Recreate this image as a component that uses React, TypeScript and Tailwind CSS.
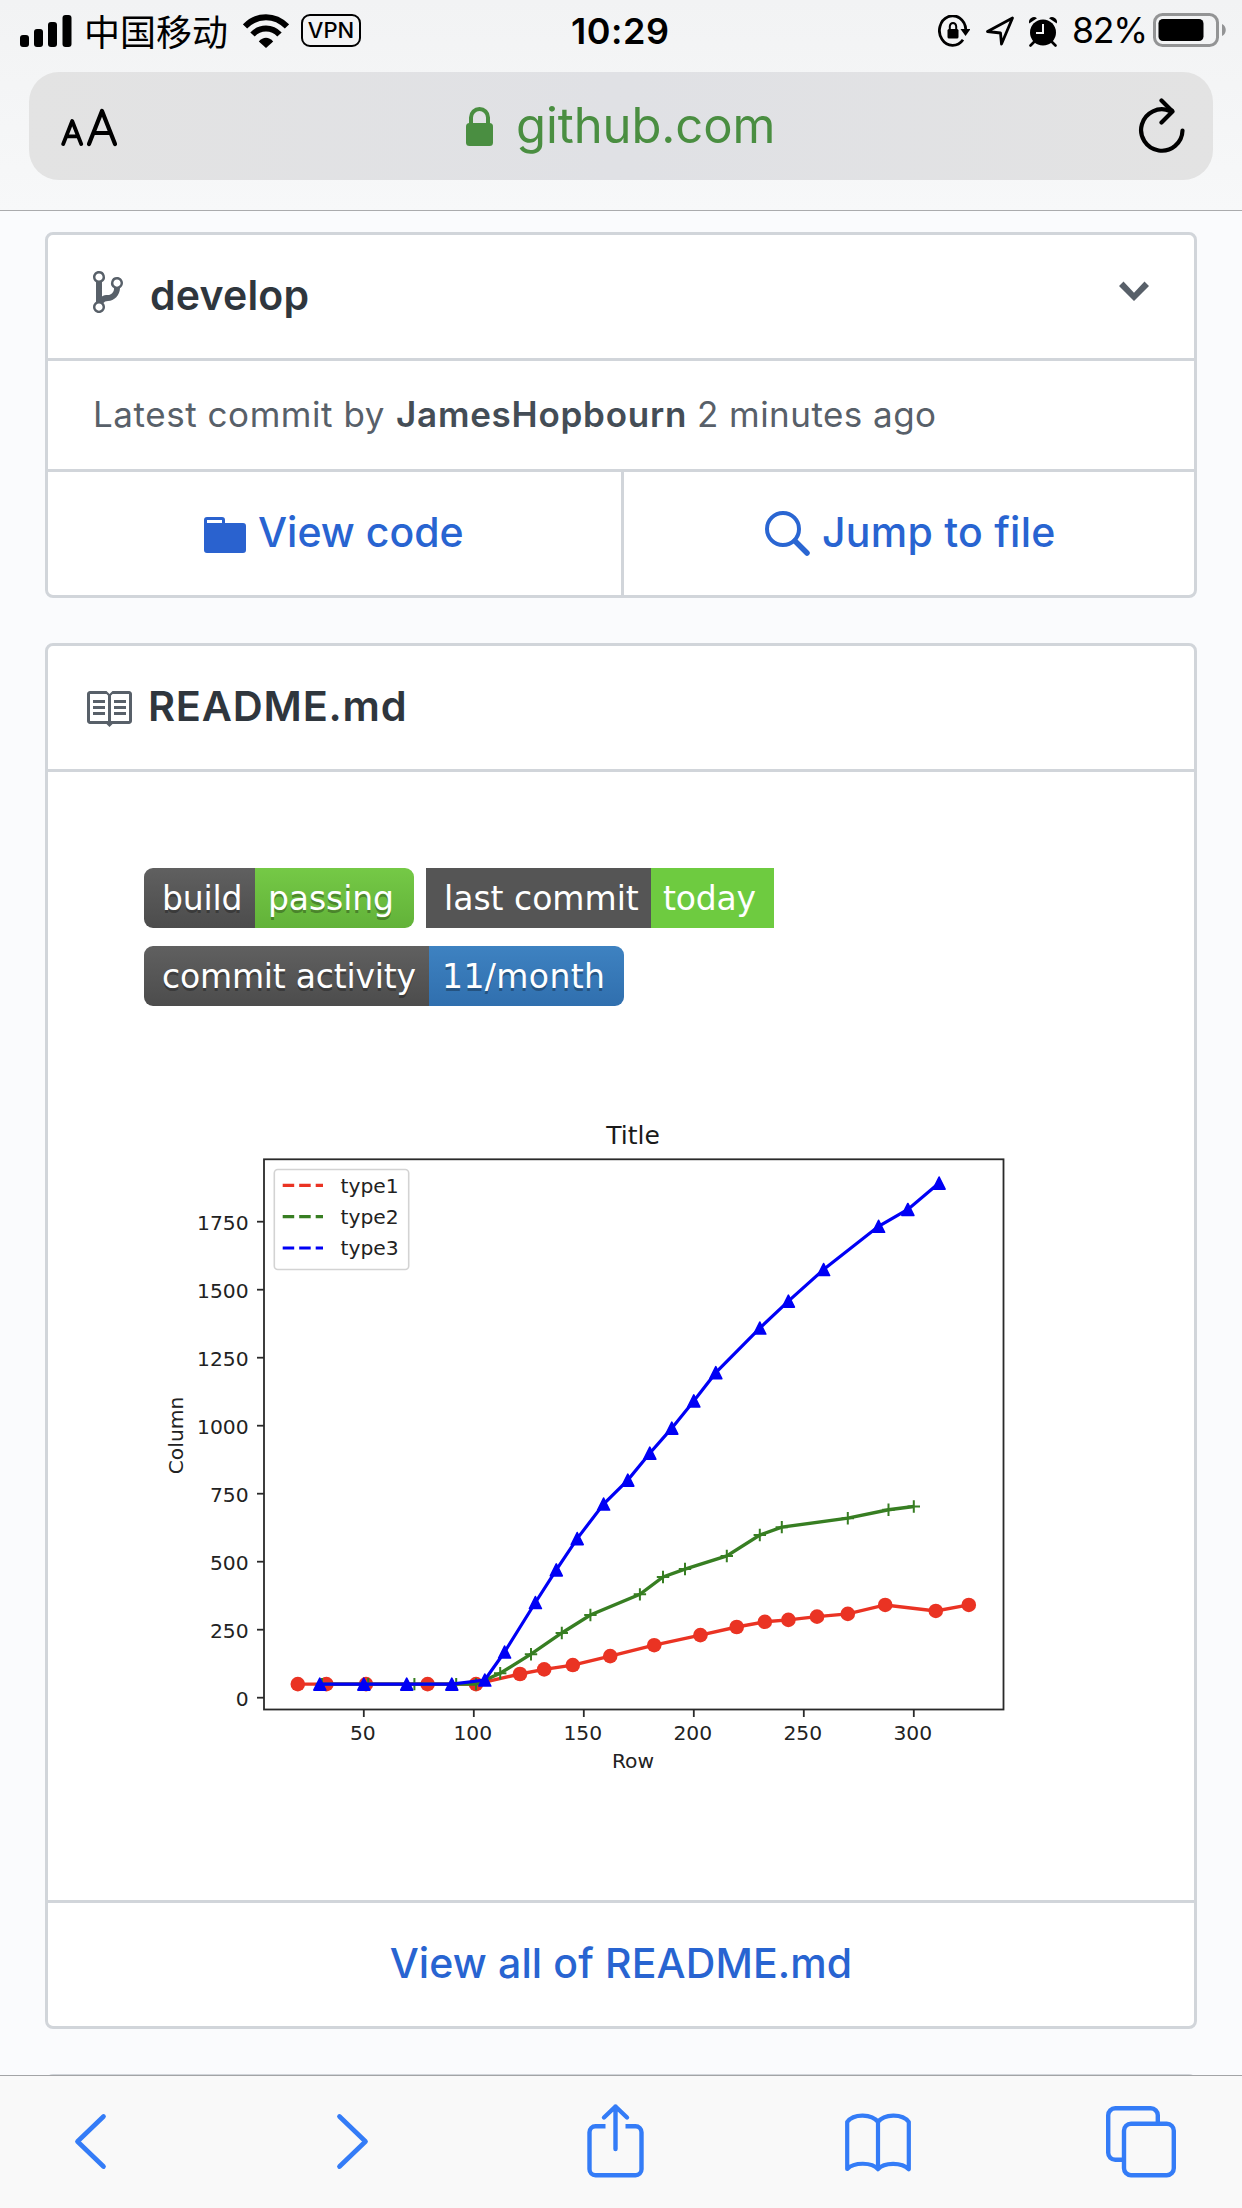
import React from "react";

type Point = [number, number];

const red: Point[] = [
  [20, 50], [33, 50], [51, 50], [79, 50], [101, 50], [121, 87], [132, 104], [145, 120], [162, 153], [182, 193],
  [203, 230], [219.5, 260], [232.3, 279], [243, 286], [256, 298], [270, 308], [287, 341], [310, 319], [325, 341],
];
const green: Point[] = [
  [31, 50], [52, 50], [73, 50], [92, 50], [101, 50], [112, 90], [126, 160], [140, 238], [153, 304], [175.5, 380],
  [186, 444], [196, 473], [215, 521], [230, 598], [240, 627], [270, 660], [288.5, 691], [300, 703],
];
const blue: Point[] = [
  [30, 50], [50, 50], [69.5, 50], [90, 50], [105, 65], [114, 168], [128, 350], [137.5, 470], [147, 585], [159, 712],
  [170, 800], [180, 899], [190, 991], [200, 1091], [210, 1195], [230, 1359], [243, 1458], [259, 1574], [284, 1733],
  [297.3, 1795], [311.5, 1892],
];

const px = (x: number) => 109.8 + x * 2.2;
const py = (y: number) => 597.7 - y * 0.272;
const line = (pts: Point[]) => pts.map(([x, y]) => `${px(x)},${py(y)}`).join(" ");

function Chart() {
  return (
    <svg
      width="900"
      height="690"
      viewBox="0 0 900 690"
      fill="none"
      fontFamily="'DejaVu Sans', sans-serif"
      fontSize="20.3"
      className="block"
    >
      <text x="489" y="44" textAnchor="middle" fontSize="25" fill="#1a1a1a">Title</text>
      <g stroke="#2a2a2a" strokeWidth="1.8">
        <rect x="120" y="59.3" width="739.5" height="550.2" />
        {[50, 100, 150, 200, 250, 300].map((v) => (
          <path key={v} d={`M${px(v)} 610v7`} />
        ))}
        {[0, 250, 500, 750, 1000, 1250, 1500, 1750].map((v) => (
          <path key={v} d={`M113 ${py(v)}h7`} />
        ))}
      </g>
      <g fill="#222">
        {[50, 100, 150, 200, 250, 300].map((v) => (
          <text key={v} x={px(v) - 1} y="640" textAnchor="middle">{v}</text>
        ))}
        {[0, 250, 500, 750, 1000, 1250, 1500, 1750].map((v) => (
          <text key={v} x="104.7" y={py(v) + 8} textAnchor="end">{v}</text>
        ))}
        <text x="489" y="668.3" textAnchor="middle">Row</text>
        <text transform="translate(38.6 335.5) rotate(-90)" textAnchor="middle">Column</text>
      </g>
      <g stroke="#ea3323" strokeWidth="3.4">
        <polyline points={line(red)} />
        {red.map(([x, y]) => (
          <circle key={x} cx={px(x)} cy={py(y)} r="7.3" fill="#ea3323" stroke="none" />
        ))}
      </g>
      <g stroke="#377e22" strokeWidth="3.4">
        <polyline points={line(green)} />
        {green.map(([x, y]) => (
          <path key={x} strokeWidth="2" d={`M${px(x) - 6.2} ${py(y)}h12.4M${px(x)} ${py(y) - 6.2}v12.4`} />
        ))}
      </g>
      <g stroke="#0000f5" strokeWidth="3.2">
        <polyline points={line(blue)} />
        {blue.map(([x, y]) => (
          <path key={x} fill="#0000f5" strokeWidth="1.6" strokeLinejoin="round" d={`M${px(x)} ${py(y) - 6}l6 12h-12z`} />
        ))}
      </g>
      <rect x="130.3" y="69.5" width="134.4" height="100" rx="3.5" fill="#fff" stroke="#d3d3d3" strokeWidth="1.6" />
      {[
        ["type1", "#ea3323", 85.3],
        ["type2", "#377e22", 116.7],
        ["type3", "#0000f5", 148],
      ].map(([name, color, y]) => (
        <g key={name as string}>
          <path d={`M138.7 ${y}h40.3`} stroke={color as string} strokeWidth="3.2" strokeDasharray="11.5 5" />
          <text x="196.5" y={(y as number) + 7.4} fill="#222">{name}</text>
        </g>
      ))}
    </svg>
  );
}

function StatusBar() {
  return (
    <div className="flex h-[62px] items-center text-black">
      <svg className="ml-5 h-8 w-[52px] shrink-0" viewBox="0 0 52 32">
        <rect x="0" y="20" width="9" height="12" rx="3" />
        <rect x="14" y="14" width="9" height="18" rx="3" />
        <rect x="28" y="7" width="9" height="25" rx="3" />
        <rect x="42.5" y="0" width="9" height="32" rx="3" />
      </svg>
      <div className="ml-3 w-[146px] pb-0.5 font-['Noto_Sans_CJK_SC',sans-serif] text-[36px] leading-none whitespace-nowrap">中国移动</div>
      <svg className="ml-[13px] h-[34px] w-[46px] shrink-0" viewBox="0 0 46 34" fill="none" stroke="#000" strokeWidth="6">
        <path d="M2 12.5C14 0 32 0 44 12.5" />
        <path d="M9.5 20.5C17 12.5 29 12.5 36.5 20.5" />
        <path d="M15.8 27.5C20 22.5 26 22.5 30.2 27.5L23 34z" fill="#000" stroke="none" />
      </svg>
      <div className="ml-3 mb-0.5 flex h-[33px] w-[60px] items-center justify-center rounded-[9px] border-[2.5px] border-black text-[22px] leading-none font-medium">
        VPN
      </div>
      <div className="ml-[210px] w-[98px] text-[36px] leading-none font-semibold tracking-[0.5px] whitespace-nowrap">10:29</div>
      <svg className="ml-[269px] h-8 w-8 shrink-0" viewBox="0 0 32 32" fill="none" stroke="#000" strokeWidth="2.8">
        <path d="M27.8 14.5A13.2 14.8 0 1 0 25 24.8" />
        <path d="M22.5 14h10l-5 7z" fill="#000" stroke="none" />
        <rect x="9.5" y="14" width="11" height="9.5" rx="1.5" fill="#000" stroke="none" />
        <path d="M11.8 15v-3.5a3.2 3.6 0 0 1 6.4 0V15" strokeWidth="2" />
      </svg>
      <svg className="ml-[15px] h-8 w-[30px] shrink-0" viewBox="0 0 30 32" fill="none" stroke="#000" strokeWidth="2.8" strokeLinejoin="round">
        <path d="M27.5 3 2.5 16.5l13 1.5L16.5 29z" />
      </svg>
      <svg className="ml-[13px] h-8 w-[30px] shrink-0" viewBox="0 0 30 32">
        <circle cx="15" cy="17.5" r="13" />
        <path d="M1.2 8.5A5 5 0 0 1 9 3.2zM28.8 8.5A5 5 0 0 0 21 3.2z" />
        <path d="m6 27-3.5 3.5M24 27l3.500 3.500" stroke="#000" strokeWidth="2.6" strokeLinecap="round" />
        <path d="M15 9v9H8" fill="none" stroke="#f3f4f5" strokeWidth="2" />
      </svg>
      <div className="ml-[14px] w-[81px] text-[35.5px] leading-none tracking-[-1.2px] whitespace-nowrap">82%</div>
      <svg className="mb-0.5 h-[34px] w-[74px] shrink-0" viewBox="0 0 74 34">
        <rect x="1.5" y="1.5" width="63" height="31" rx="8" fill="none" stroke="#939495" strokeWidth="3" />
        <rect x="5.5" y="6" width="45" height="22" rx="4.5" />
        <path d="M69 11c5 2 5 10 0 12z" fill="#939495" />
      </svg>
    </div>
  );
}

function AddressBar() {
  return (
    <div className="mx-[29px] mt-[10px] flex h-[108px] items-center rounded-[30px] bg-linear-to-r from-[#e3e3e3] via-[#e0e1e5] to-[#e3e3e3]">
      <svg className="mt-[3px] ml-8 h-10 w-[58px] shrink-0" viewBox="0 0 58 40" fill="none" stroke="#000" strokeWidth="4.2" strokeLinecap="round" strokeLinejoin="round">
        <path d="m2.2 36 9-23 9 23M5.5 28.3h11.4" strokeWidth="3.8" />
        <path d="m28 36 13-33 13 33M32.5 25h17" />
      </svg>
      <svg className="ml-[347px] h-[39px] w-[27px] shrink-0" viewBox="0 0 27 39" fill="#4a8e41">
        <rect y="16" width="27" height="23" rx="3.5" />
        <path d="M5 18v-7.5a8.5 8.5 0 0 1 17 0V18" fill="none" stroke="#4a8e41" strokeWidth="4" />
      </svg>
      <div className="ml-[23px] w-[260px] pb-0.5 text-[49px] leading-none tracking-[-0.1px] whitespace-nowrap text-[#4a8e41]">github.com</div>
      <svg className="ml-[362px] h-14 w-12 shrink-0" viewBox="0 0 48 56" fill="none" stroke="#000" strokeWidth="4.2" strokeLinecap="round" strokeLinejoin="round">
        <path d="M44.5 32.5A20.7 20.7 0 1 1 32 13L34 12.7" />
        <path d="m23.5 2.5 11 11-11 11" />
      </svg>
    </div>
  );
}

function RepoCard() {
  return (
    <section className="rounded-lg border-[3px] border-[#d1d5da] bg-white">
      <div className="flex h-[123px] items-center pb-0.5">
        <svg className="-mt-2 ml-[45px] h-12 w-[30px] shrink-0" viewBox="0 0 10 16" fill="#586069">
          <path d="M10 5c0-1.11-.89-2-2-2a1.993 1.993 0 0 0-1 3.72v.3c-.02.52-.23.98-.63 1.38-.4.4-.86.61-1.38.63-.83.02-1.48.16-2 .45V4.72a1.993 1.993 0 0 0-1-3.72C.88 1 0 1.89 0 3a2 2 0 0 0 1 1.72v6.56c-.59.35-1 .99-1 1.72 0 1.11.89 2 2 2 1.11 0 2-.89 2-2 0-.53-.2-1-.53-1.36.09-.06.48-.41.59-.47.25-.11.56-.17.94-.17 1.05-.05 1.95-.45 2.75-1.25S8.95 7.77 9 6.73h-.02C9.59 6.37 10 5.73 10 5zM2 1.8c.66 0 1.2.55 1.2 1.2 0 .65-.55 1.2-1.2 1.2C1.35 4.2.8 3.65.8 3c0-.65.55-1.2 1.2-1.2zm0 12.41c-.66 0-1.2-.55-1.2-1.2 0-.65.55-1.2 1.2-1.2.65 0 1.2.55 1.2 1.2 0 .65-.55 1.2-1.2 1.2zm6-8c-.66 0-1.2-.55-1.2-1.2 0-.65.55-1.2 1.2-1.2.65 0 1.2.55 1.2 1.2 0 .65-.55 1.2-1.2 1.2z" />
        </svg>
        <h2 className="ml-[27px] flex-1 text-[41px] font-semibold tracking-[0.2px] text-[#2f363d]">develop</h2>
        <svg className="-mt-2 mr-[45px] h-12 w-[30px] shrink-0" viewBox="0 0 10 16" fill="#586069">
          <path d="M5 11 0 6l1.5-1.5L5 8.25 8.5 4.5 10 6z" />
        </svg>
      </div>
      <div className="flex h-[111px] items-center border-t-[3px] border-[#d1d5da] pb-0.5 pl-[45px] text-[35px] whitespace-pre text-[#586069]">
        <span className="w-[303px] tracking-[0.55px]">Latest commit by</span>
        <span className="w-[301px] font-semibold tracking-[0.75px] text-[#444d56]">JamesHopbourn</span>
        <span className="tracking-[0.45px]">2 minutes ago</span>
      </div>
      <div className="flex h-[126px] border-t-[3px] border-[#d1d5da] text-[41px] font-medium text-[#2864d1]">
        <div className="flex w-[576px] items-center border-r-[3px] border-[#d1d5da] pb-0.5 pl-[156px]">
          <svg className="mt-1 h-9 w-[42px]" viewBox="0 0 42 36" fill="#2a62cf">
            <path fillRule="evenodd" d="M3 0h15c2 0 3 1 3 3v3h18c2 0 3 1 3 3v24c0 2-1 3-3 3H3c-2 0-3-1-3-3V3c0-2 1-3 3-3zm0 3v3h15V3z" />
          </svg>
          <span className="ml-[12px]">View code</span>
        </div>
        <div className="flex flex-1 items-center pb-0.5 pl-[141px]">
          <svg className="mt-0.5 h-[45px] w-[45px]" viewBox="0 0 45 45" fill="none" stroke="#2a66d2">
            <circle cx="18" cy="18" r="16" strokeWidth="4" />
            <path d="m30 30 12 12" strokeWidth="5.5" strokeLinecap="round" />
          </svg>
          <span className="ml-[12px] tracking-[0.25px]">Jump to file</span>
        </div>
      </div>
    </section>
  );
}

function Badges() {
  return (
    <div className="ml-24 flex w-[700px] flex-wrap gap-x-3 gap-y-[18px] font-['DejaVu_Sans',sans-serif] text-[33px] leading-[62px] whitespace-nowrap text-white">
      <div className="flex h-[60px] overflow-hidden rounded-[9px] [text-shadow:0_3px_0_rgba(1,1,1,0.3)]">
        <div className="w-[111px] bg-linear-to-b from-[#606060] to-[#4c4c4c] pl-[18px] tracking-[-0.2px]">build</div>
        <div className="w-[159px] bg-linear-to-b from-[#75c946] to-[#62b239] pl-[13px] tracking-[-0.1px]">passing</div>
      </div>
      <div className="flex h-[60px]">
        <div className="w-[225px] bg-[#555] pl-[18px]">last commit</div>
        <div className="w-[123px] bg-[#6ecb40] pl-3 tracking-[-0.2px]">today</div>
      </div>
      <div className="flex h-[60px] overflow-hidden rounded-[9px] [text-shadow:0_3px_0_rgba(1,1,1,0.3)]">
        <div className="w-[285px] bg-linear-to-b from-[#606060] to-[#4c4c4c] pl-[18px] tracking-[-0.2px]">commit activity</div>
        <div className="w-[195px] bg-linear-to-b from-[#3e82c1] to-[#306fae] pl-[13px] tracking-[0.4px]">11/month</div>
      </div>
    </div>
  );
}

function ReadmeCard() {
  return (
    <section className="mt-[45px] rounded-lg border-[3px] border-[#d1d5da] bg-white">
      <div className="flex h-[123px] items-center pb-0.5">
        <svg className="mt-1 ml-9 h-12 w-12 shrink-0" viewBox="0 0 16 16" fill="#586069">
          <path d="M3 5h4v1H3V5zm0 3h4V7H3v1zm0 2h4V9H3v1zm11-5h-4v1h4V5zm0 2h-4v1h4V7zm0 2h-4v1h4V9zm2-6v9c0 .55-.45 1-1 1H9.5l-1 1-1-1H2c-.55 0-1-.45-1-1V3c0-.55.45-1 1-1h5.5l1 1 1-1H15c.55 0 1 .45 1 1zm-8 .5L7.5 3H2v9h6V3.5zm7-.5H9.5l-.5.5V12h6V3z" />
        </svg>
        <h2 className="ml-4 text-[41.5px] font-semibold tracking-[0.8px] text-[#2f363d]">README.md</h2>
      </div>
      <div className="h-[1131px] border-t-[3px] border-[#d1d5da] pt-24">
        <Badges />
        <div className="mt-[94px] ml-24">
          <Chart />
        </div>
      </div>
      <div className="flex h-[126px] items-center justify-center border-t-[3px] border-[#d1d5da] pb-0.5 text-[41px] font-medium tracking-[0.12px] text-[#2864d1]">
        View all of README.md
      </div>
    </section>
  );
}

function Toolbar() {
  return (
    <nav className="flex h-[133px] items-start border-t border-[#a3a4a6] bg-[#f9f9f9] pt-[26px]">
      <svg className="ml-[72px] h-20 w-10" viewBox="0 0 40 80" fill="none" stroke="#347cf7" strokeWidth="4.7" strokeLinecap="round" strokeLinejoin="round">
        <path d="M31.5 14.5 5.5 39.5l26 25" />
      </svg>
      <svg className="ml-[219px] h-20 w-10" viewBox="0 0 40 80" fill="none" stroke="#347cf7" strokeWidth="4.7" strokeLinecap="round" strokeLinejoin="round">
        <path d="m8.5 14.5 26 25-26 25" />
      </svg>
      <svg className="ml-[214px] h-20 w-[60px]" viewBox="0 0 60 80" fill="none" stroke="#347cf7" strokeWidth="4.4" strokeLinecap="round" strokeLinejoin="round">
        <path d="M20.5 24.2h-10a6 6 0 0 0-6 6v37a6 6 0 0 0 6 6h40a6 6 0 0 0 6-6v-37a6 6 0 0 0-6-6h-10" strokeLinecap="butt" />
        <path d="M30.5 4.5V47M19 15.5 30.5 4.5 42 15.5" />
      </svg>
      <svg className="ml-[199px] h-20 w-[68px]" viewBox="0 0 68 80" fill="none" stroke="#347cf7" strokeWidth="4.2" strokeLinecap="round" strokeLinejoin="round">
        <path d="M34 20C28 12 10 11 3.2 20v47C10 60 28 60 34 67.2 40 60 58 60 64.8 67.2V20C58 11 40 12 34 20zM34 20v47" />
      </svg>
      <svg className="ml-[192px] h-20 w-[72px]" viewBox="0 0 72 80" fill="none" stroke="#347cf7" strokeWidth="4.4">
        <path d="M53.8 20v-6.7a7 7 0 0 0-7-7H11.2a7 7 0 0 0-7 7v37.5a7 7 0 0 0 7 7H18" />
        <rect x="20" y="21.7" width="49.8" height="51.5" rx="7" />
      </svg>
    </nav>
  );
}

export default function App() {
  return (
    <div className="flex h-[2208px] w-[1242px] flex-col overflow-hidden bg-[#fafbfd] font-['Inter','Liberation_Sans',sans-serif] antialiased">
      <header className="h-[211px] shrink-0 border-b border-[#aaabad] bg-linear-to-b from-[#f2f3f4] to-[#f7f8f9]">
        <StatusBar />
        <AddressBar />
      </header>
      <main className="flex-1 overflow-hidden px-[45px] pt-[21px]">
        <RepoCard />
        <ReadmeCard />
        <div className="mt-[45px] h-10 rounded-lg border-[3px] border-[#d1d5da] bg-white" />
      </main>
      <Toolbar />
    </div>
  );
}
